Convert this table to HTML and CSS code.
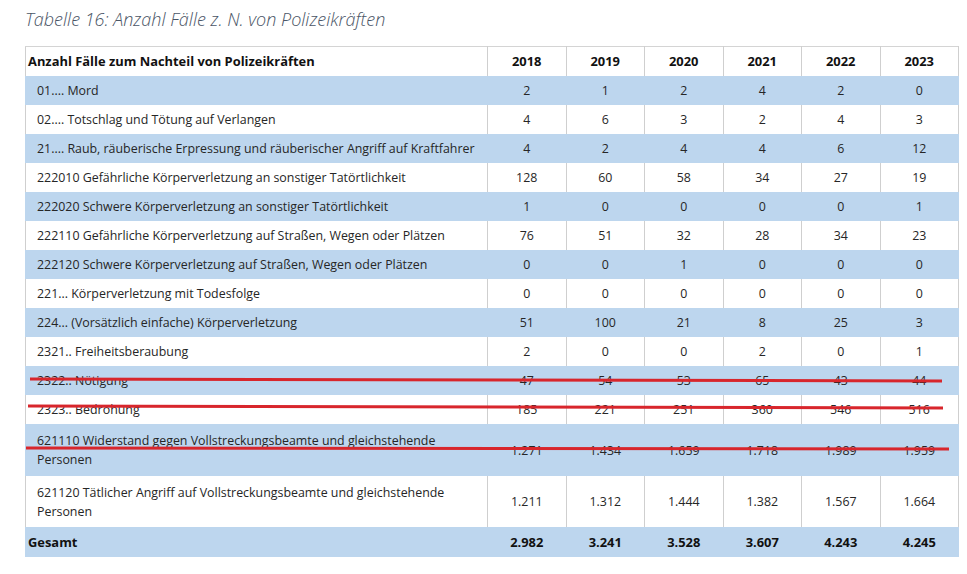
FILE: index.html
```html
<!DOCTYPE html>
<html lang="de">
<head>
<meta charset="utf-8">
<title>Tabelle 16</title>
<link rel="stylesheet" href="styles.css">
</head>
<body>
<div class="page">
  <p class="caption">Tabelle 16: Anzahl Fälle z. N. von Polizeikräften</p>
  <div class="table-wrap">
    <table class="stats">
      <colgroup>
        <col class="c-label">
        <col class="c-year"><col class="c-year"><col class="c-year">
        <col class="c-year"><col class="c-year"><col class="c-year">
      </colgroup>
      <thead>
        <tr class="head">
          <th class="label">Anzahl Fälle zum Nachteil von Polizeikräften</th>
          <th>2018</th><th>2019</th><th>2020</th><th>2021</th><th>2022</th><th>2023</th>
        </tr>
      </thead>
      <tbody>
        <tr class="alt"><td class="label">01.... Mord</td><td>2</td><td>1</td><td>2</td><td>4</td><td>2</td><td>0</td></tr>
        <tr><td class="label">02.... Totschlag und Tötung auf Verlangen</td><td>4</td><td>6</td><td>3</td><td>2</td><td>4</td><td>3</td></tr>
        <tr class="alt"><td class="label">21.... Raub, räuberische Erpressung und räuberischer Angriff auf Kraftfahrer</td><td>4</td><td>2</td><td>4</td><td>4</td><td>6</td><td>12</td></tr>
        <tr><td class="label">222010 Gefährliche Körperverletzung an sonstiger Tatörtlichkeit</td><td>128</td><td>60</td><td>58</td><td>34</td><td>27</td><td>19</td></tr>
        <tr class="alt"><td class="label">222020 Schwere Körperverletzung an sonstiger Tatörtlichkeit</td><td>1</td><td>0</td><td>0</td><td>0</td><td>0</td><td>1</td></tr>
        <tr><td class="label">222110 Gefährliche Körperverletzung auf Straßen, Wegen oder Plätzen</td><td>76</td><td>51</td><td>32</td><td>28</td><td>34</td><td>23</td></tr>
        <tr class="alt"><td class="label">222120 Schwere Körperverletzung auf Straßen, Wegen oder Plätzen</td><td>0</td><td>0</td><td>1</td><td>0</td><td>0</td><td>0</td></tr>
        <tr><td class="label">221... Körperverletzung mit Todesfolge</td><td>0</td><td>0</td><td>0</td><td>0</td><td>0</td><td>0</td></tr>
        <tr class="alt"><td class="label">224... (Vorsätzlich einfache) Körperverletzung</td><td>51</td><td>100</td><td>21</td><td>8</td><td>25</td><td>3</td></tr>
        <tr><td class="label">2321.. Freiheitsberaubung</td><td>2</td><td>0</td><td>0</td><td>2</td><td>0</td><td>1</td></tr>
        <tr class="alt"><td class="label">2322.. Nötigung</td><td>47</td><td>54</td><td>53</td><td>65</td><td>43</td><td>44</td></tr>
        <tr><td class="label">2323.. Bedrohung</td><td>185</td><td>221</td><td>251</td><td>360</td><td>546</td><td>516</td></tr>
        <tr class="alt tall"><td class="label">621110 Widerstand gegen Vollstreckungsbeamte und gleichstehende<br>Personen</td><td>1.271</td><td>1.434</td><td>1.659</td><td>1.718</td><td>1.989</td><td>1.959</td></tr>
        <tr class="tall2"><td class="label">621120 Tätlicher Angriff auf Vollstreckungsbeamte und gleichstehende<br>Personen</td><td>1.211</td><td>1.312</td><td>1.444</td><td>1.382</td><td>1.567</td><td>1.664</td></tr>
        <tr class="alt total"><td class="label">Gesamt</td><td>2.982</td><td>3.241</td><td>3.528</td><td>3.607</td><td>4.243</td><td>4.245</td></tr>
      </tbody>
    </table>
    <svg class="strikes" width="933" height="520" viewBox="0 0 933 520" aria-hidden="true">
      <line x1="5" y1="333" x2="917" y2="335" />
      <line x1="3" y1="360" x2="918" y2="362" />
      <line x1="1" y1="402" x2="924" y2="403" />
    </svg>
  </div>
</div>
</body>
</html>
```

FILE: styles.css
```css
html, body {
  margin: 0;
  padding: 0;
  background: #ffffff;
}

body {
  font-family: "Open Sans", "Noto Sans", "Liberation Sans", sans-serif;
  color: #1e1e1e;
}

.page {
  padding: 6px 0 0 25px;
}

.caption {
  margin: 0;
  height: 40px;
  font-size: 18px;
  line-height: 27px;
  font-style: italic;
  font-weight: 300;
  color: #4a5566;
}

.table-wrap {
  position: relative;
  width: 933px;
}

.stats {
  width: 933px;
  table-layout: fixed;
  border-collapse: collapse;
  font-size: 12.4px;
}

.c-label { width: 462px; }
.c-year { width: 78.5px; }

.stats th,
.stats td {
  padding: 0;
  height: 29px;
  line-height: 19px;
  text-align: center;
  vertical-align: middle;
  border-left: 1px solid #cfcfcf;
  border-right: 1px solid #cfcfcf;
  color: #262626;
}

.stats th {
  font-weight: 700;
  font-size: 12.9px;
  color: #111;
  border-top: 1px solid #d4d4d4;
}

.stats .label {
  text-align: left;
  padding-left: 11px;
  white-space: nowrap;
}

.stats th.label {
  padding-left: 2px;
}

.alt td {
  background: #bdd6ee;
  border-left-color: #bdd6ee;
  border-right-color: #bdd6ee;
}

.tall td { height: 52px; }
.tall2 td { height: 51px; }

.total td {
  height: 30px;
  font-weight: 700;
  font-size: 12.9px;
  color: #111;
}

.total .label {
  padding-left: 2px;
}

.strikes {
  position: absolute;
  left: 0;
  top: 0;
  overflow: visible;
  pointer-events: none;
}

.strikes line {
  stroke: #d8262c;
  stroke-width: 3;
  stroke-linecap: butt;
}
```
